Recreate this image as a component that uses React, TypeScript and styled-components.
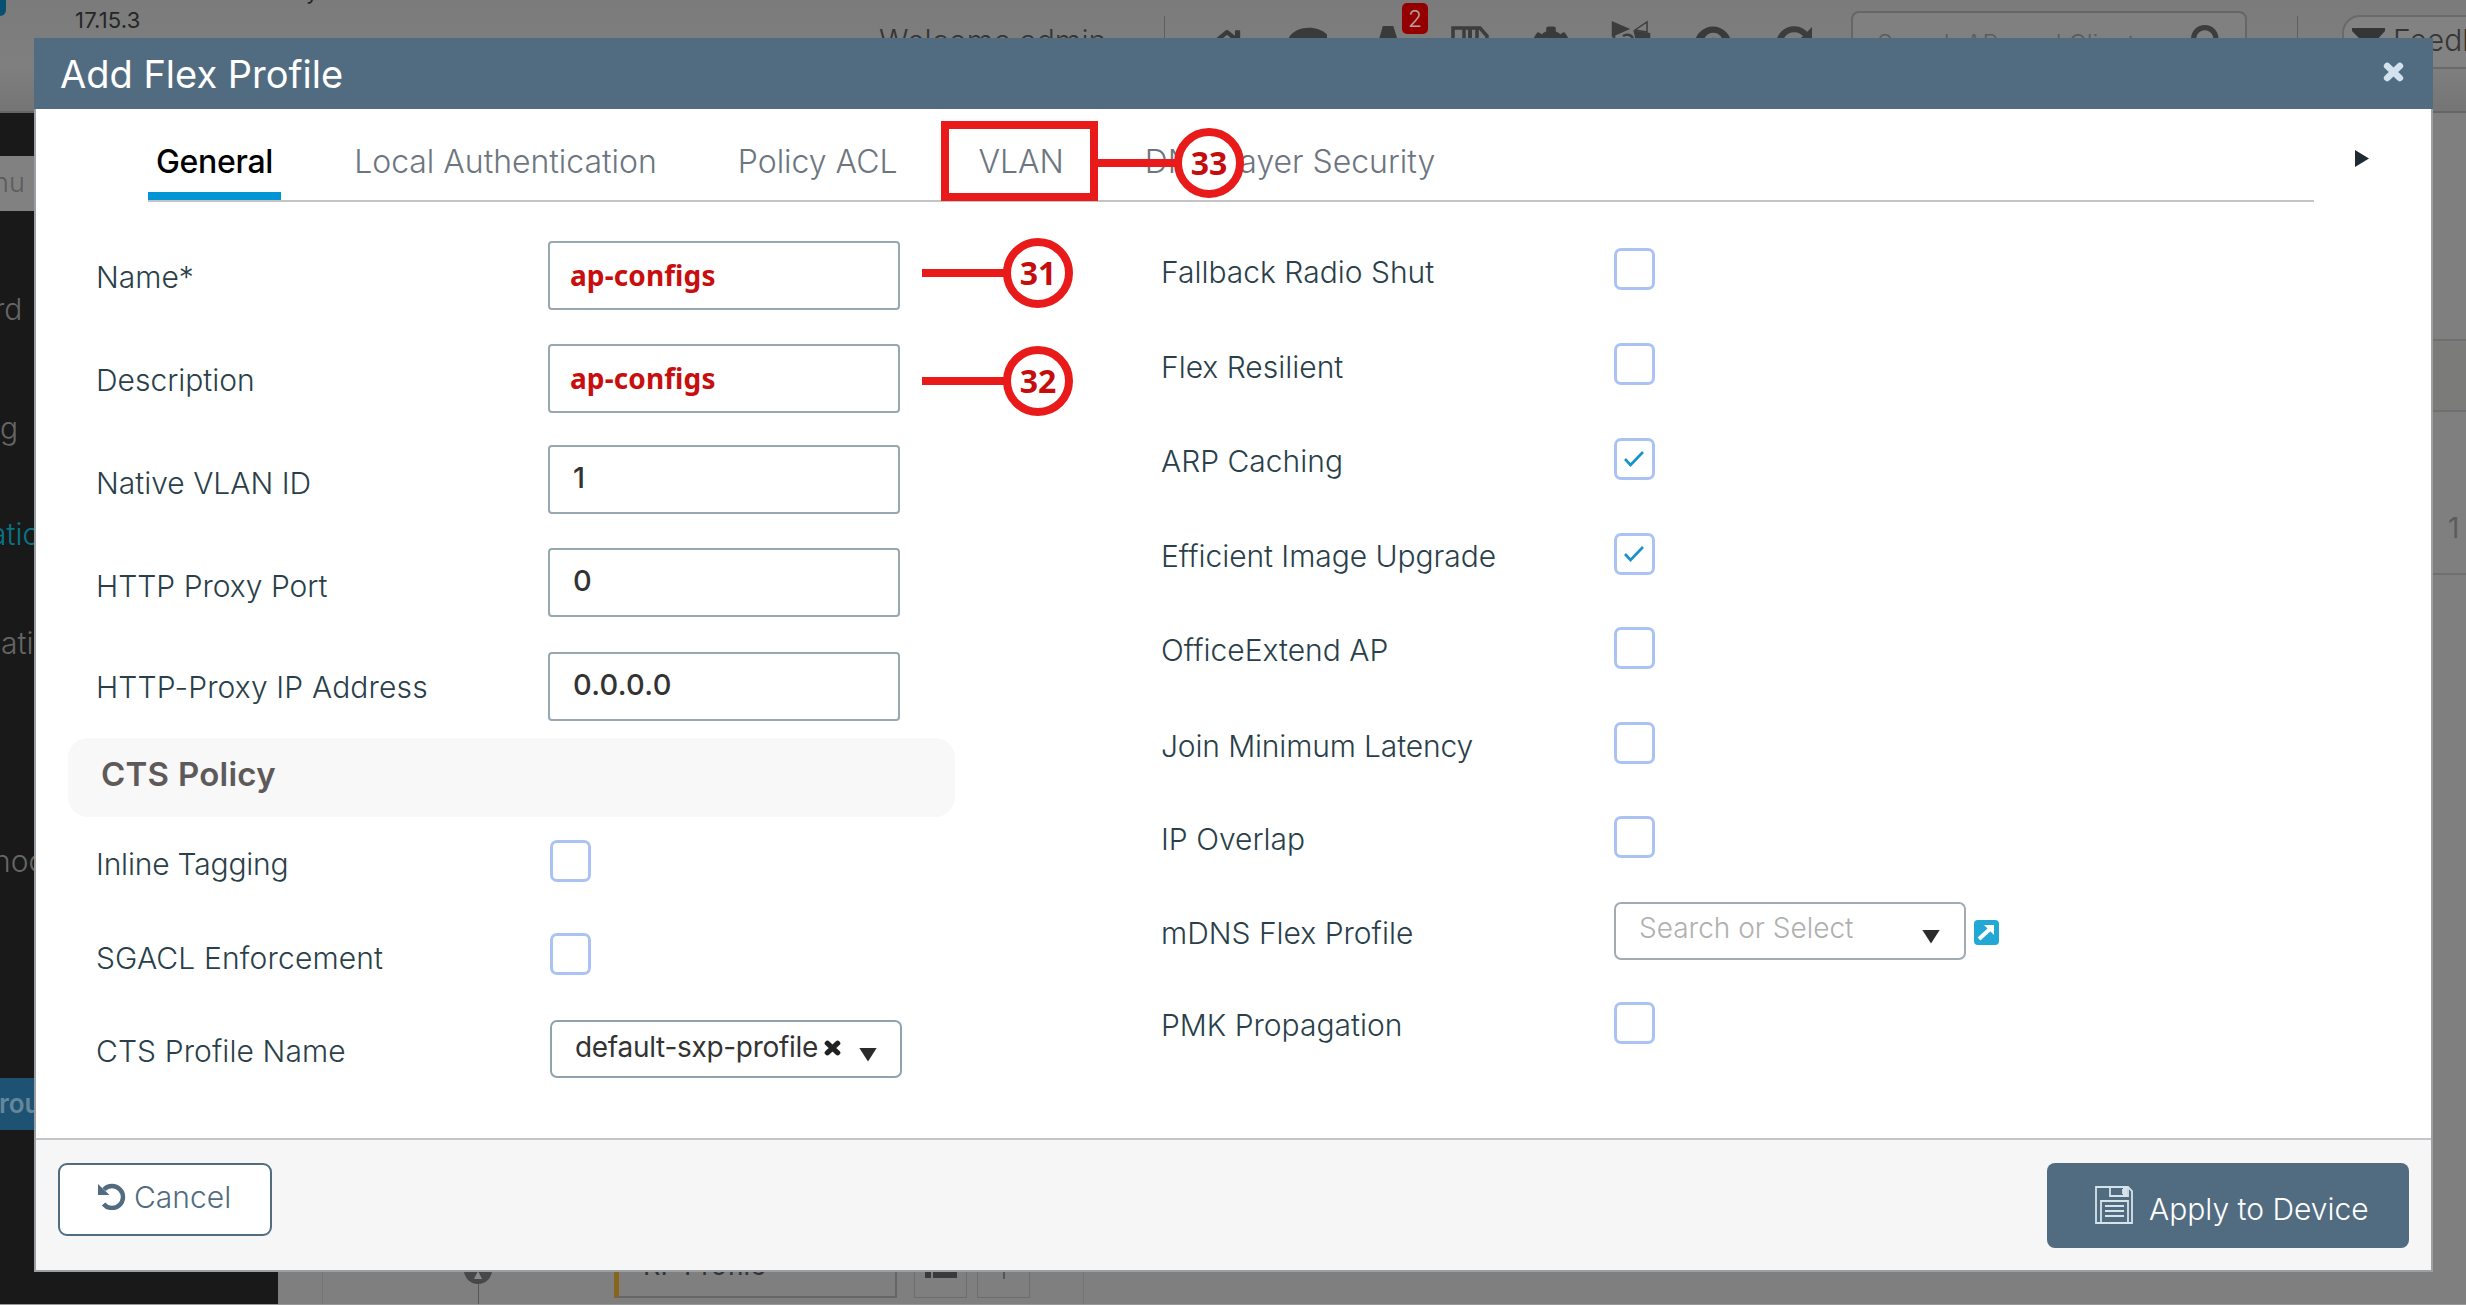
import React from "react";
import styled, { createGlobalStyle, css } from "styled-components";
import { FaHome, FaCog, FaSearch, FaQuestionCircle } from "react-icons/fa";

const ui = `Inter, "Liberation Sans", sans-serif`;
const callout = `"Noto Sans", "Open Sans", sans-serif`;
const slate = "#516c80";
const red = "#e91a1a";

const GlobalStyle = createGlobalStyle`
  * { box-sizing: border-box; }
  html, body { margin: 0; padding: 0; }
  body { width: 2466px; height: 1305px; overflow: hidden; font-family: ${ui}; }
`;

const Page = styled.div`
  position: relative;
  width: 2466px;
  height: 1305px;
  overflow: hidden;
  display: flex;
  flex-direction: column;
  background: #7f7f7f;
  border-bottom: 1px solid #999;
`;

/* ---------- dimmed application behind the dialog ---------- */

const TopBar = styled.header`
  height: 113px;
  flex: none;
  display: flex;
  align-items: flex-start;
  overflow: hidden;
  background: linear-gradient(#7b7b7b, #7f7f7f 60%, #757575);
  border-bottom: 2px solid #666;
  color: #353535;
  > * { flex: none; }
`;
const Brand = styled.div`
  width: 879px;
  display: flex;
  align-items: flex-start;
`;
const LogoEdge = styled.div`
  width: 6px;
  height: 40px;
  margin-top: -24px;
  border-radius: 0 20px 20px 0;
  background: #075072;
`;
const Product = styled.div`
  margin: -24px 0 0 69px;
  font-size: 22px;
  line-height: 31px;
  color: #262626;
  div:first-child { padding-left: 231px; height: 29px; }
  div:last-child { letter-spacing: 0.2px; }
`;
const Welcome = styled.div`
  width: 285px;
  padding-top: 23px;
  font-size: 30.5px;
  font-weight: 300;
  line-height: 36px;
  white-space: nowrap;
`;
const Rule = styled.div<{ $ml?: number }>`
  width: 1px;
  height: 60px;
  margin: 16px 0 0 ${(p) => p.$ml ?? 0}px;
  background: #5f5f5f;
`;
const Tools = styled.div`
  display: flex;
  align-items: flex-start;
  gap: 43px;
  padding: 26px 0 0 43px;
  width: 686px;
  svg { flex: none; width: 38px; height: 38px; color: #3a3a3a; }
`;
const AlertTool = styled.div`
  position: relative;
  height: 38px;
`;
const AlertCount = styled.span`
  position: absolute;
  left: 32px;
  top: -23px;
  width: 26px;
  height: 31px;
  border-radius: 5px;
  background: #940000;
  color: #b9a0a0;
  font-size: 23px;
  font-weight: 300;
  line-height: 33px;
  text-align: center;
`;
const GlobalSearch = styled.div`
  width: 396px;
  height: 54px;
  margin-top: 11px;
  padding: 13px 20px 0 24px;
  display: flex;
  justify-content: space-between;
  border: 2px solid #666;
  border-radius: 8px;
  background: #808080;
  color: #5c5c5c;
  font-size: 25px;
  font-weight: 300;
  line-height: 36px;
  white-space: nowrap;
  svg { width: 34px; height: 34px; margin-top: -1px; color: #3d3d3d; }
`;
const Feedback = styled.div`
  width: 200px;
  height: 54px;
  margin: 15px 0 0 44px;
  padding: 5px 8px;
  display: flex;
  gap: 8px;
  border: 2px solid #6a6a6a;
  border-radius: 18px;
  background: #828282;
  color: #353535;
  font-size: 30px;
  font-weight: 300;
  line-height: 36px;
  svg { flex: none; width: 33px; height: 30px; margin-top: 6px; }
`;
const Below = styled.div`
  flex: 1;
  display: flex;
  min-height: 0;
`;
const SideNav = styled.nav`
  width: 278px;
  flex: none;
  padding-top: 43px;
  background: #191919;
  overflow: hidden;
`;
const NavSearch = styled.div`
  height: 55px;
  margin-bottom: 80px;
  background: #818181;
  color: #5c5c5c;
  font-size: 27px;
  font-weight: 300;
  line-height: 53px;
  text-indent: -7px;
`;
const NavItem = styled.div<{ $h: number; $x: number; $tone?: "link" | "active" }>`
  height: ${(p) => p.$h}px;
  text-indent: ${(p) => p.$x}px;
  font-size: 30px;
  font-weight: 300;
  line-height: 36px;
  color: #666;
  white-space: nowrap;
  ${(p) => p.$tone === "link" && css`color: #087488;`}
  ${(p) => p.$tone === "active" && css`
    background: #1d5272; color: #66869a; font-size: 26px; font-weight: 600; line-height: 52px;
  `}
`;
const Main = styled.main`
  flex: 1;
  display: flex;
  align-items: flex-end;
  justify-content: space-between;
`;
const Flow = styled.div`
  height: 60px;
  margin-left: 44px;
  padding-left: 141px;
  width: 762px;
  display: flex;
  border-left: 1px solid #747474;
  border-right: 1px solid #747474;
`;
const FlowPin = styled.div`
  width: 28px;
  margin-right: 122px;
  display: flex;
  flex-direction: column;
  align-items: center;
`;
const PinDot = styled.div`
  width: 28px;
  height: 28px;
  margin-top: 12px;
  border-radius: 50%;
  background: #484848;
  &::after {
    content: "";
    display: block;
    width: 8px;
    height: 8px;
    margin: 15px auto 0;
    background: #8a8a8a;
    clip-path: polygon(50% 0, 100% 100%, 0 100%);
  }
`;
const PinStem = styled.div`
  flex: 1;
  width: 1px;
  background: #555;
`;
const FlowBox = styled.div`
  width: 283px;
  height: 54px;
  padding: 2px 0 0 24px;
  border: 2px solid #666;
  border-left: 5px solid #87651a;
  color: #333;
  font-size: 27px;
  line-height: 36px;
`;
const FlowButton = styled.div<{ $ml: number }>`
  width: 53px;
  height: 54px;
  margin-left: ${(p) => p.$ml}px;
  padding: 22px 10px 0;
  border: 1px solid #6c6c6c;
  svg { display: block; }
`;
const TableEdge = styled.div`
  width: 35px;
  align-self: flex-start;
  margin-top: 226px;
`;
const TableHead = styled.div`
  height: 73px;
  border-top: 2px solid #6f6f6f;
  border-bottom: 2px solid #6f6f6f;
  background: #7b7c79;
`;
const TableRow = styled.div`
  height: 163px;
  padding: 98px 0 0 17px;
  border-bottom: 2px solid #6f6f6f;
  color: #5b5b5b;
  font-size: 28px;
  line-height: 36px;
`;

/* ---------- dialog ---------- */

const Dialog = styled.section`
  position: absolute;
  left: 34px;
  top: 38px;
  width: 2399px;
  height: 1234px;
  display: flex;
  flex-direction: column;
  border: solid #9aa0a4;
  border-width: 0 2px 2px 2px;
  background: #fff;
`;
const TitleBar = styled.div`
  height: 71px;
  flex: none;
  margin: 0 -2px;
  padding: 0 29px 0 26px;
  display: flex;
  align-items: center;
  justify-content: space-between;
  background: ${slate};
  svg { margin-top: -3px; }
`;
const Title = styled.h1`
  margin: 0;
  color: #fff;
  font-size: 38px;
  font-weight: 400;
  line-height: 44px;
`;
const TabStrip = styled.div`
  display: flex;
  height: 93px;
  flex: none;
`;
const Tabs = styled.div`
  height: 93px;
  width: 2166px;
  flex: none;
  margin-left: 112px;
  display: flex;
  gap: 65px;
  border-bottom: 2px solid #c4c4c4;
`;
const Tab = styled.div<{ $on?: boolean }>`
  height: 91px;
  padding: 35px 8px 0;
  font-size: 32px;
  font-weight: 300;
  line-height: 36px;
  letter-spacing: -0.02px;
  white-space: nowrap;
  color: #6d7680;
  ${(p) => p.$on && css`
    font-weight: 500; letter-spacing: -0.3px; color: #000; border-bottom: 8px solid #0096d6;
  `}
`;
const NextTab = styled.div`
  margin: 41px 0 0 41px;
  width: 14px;
  height: 17px;
  background: #202a33;
  clip-path: polygon(0 0, 100% 50%, 0 100%);
`;
const Form = styled.div`
  flex: 1;
  display: flex;
`;
const LeftColumn = styled.div`
  width: 1126px;
  padding: 39px 0 0 60px;
`;
const RightColumn = styled.div`
  flex: 1;
  padding-top: 46px;
  margin-left: -1px;
`;
const Row = styled.div<{ $h: number; $label: number }>`
  height: ${(p) => p.$h}px;
  display: grid;
  grid-template-columns: ${(p) => p.$label}px auto;
  align-items: start;
  justify-content: start;
`;
const Label = styled.label<{ $dy: number; $ls?: number }>`
  padding-top: ${(p) => p.$dy}px;
  font-size: 30px;
  font-weight: 300;
  line-height: 36px;
  letter-spacing: ${(p) => p.$ls ?? 0}px;
  white-space: nowrap;
  color: #2a3f4a;
`;
const Field = styled.div<{ $entered?: boolean }>`
  width: 352px;
  height: 69px;
  padding: 13px 0 0 23px;
  border: 2px solid #98a8b0;
  border-radius: 4px;
  font-size: 29px;
  font-weight: 500;
  line-height: 36px;
  letter-spacing: 0.3px;
  color: #333;
  ${(p) => p.$entered && css`
    padding: 14px 0 0 20px;
    font-family: ${callout};
    font-size: 28px;
    font-weight: 700;
    letter-spacing: 0.1px;
    color: #c80e0e;
  `}
`;
const Section = styled.h2`
  width: 887px;
  height: 79px;
  margin: 0 0 23px -28px;
  padding: 18px 0 0 33px;
  border-radius: 20px;
  background: #f8f8f8;
  color: #5e5a5a;
  font-size: 33px;
  font-weight: 600;
  line-height: 36px;
  letter-spacing: 0.25px;
`;
const Check = styled.div`
  width: 41px;
  height: 42px;
  border: 3px solid #abc3f4;
  border-radius: 7px;
  svg { display: block; margin: 9px 0 0 6px; }
`;
const Picker = styled.div<{ $empty?: boolean }>`
  width: 352px;
  height: 58px;
  padding-left: 23px;
  display: flex;
  align-items: center;
  border: 2px solid ${(p) => (p.$empty ? "#a0abb3" : "#8fa3ac")};
  border-radius: 7px;
  font-size: 28px;
  font-weight: 300;
  line-height: 36px;
  color: ${(p) => (p.$empty ? "#b0b0b0" : "#333")};
  white-space: nowrap;
`;
const PickerText = styled.span<{ $w: number; $heavy?: boolean }>`
  width: ${(p) => p.$w}px;
  margin-top: ${(p) => (p.$heavy ? -4 : -6)}px;
  font-weight: ${(p) => (p.$heavy ? 400 : 300)};
  letter-spacing: ${(p) => (p.$heavy ? -0.3 : 0)}px;
`;
const Caret = styled.span`
  width: 18px;
  height: 14px;
  margin-top: 11px;
  background: #2b2b2b;
  clip-path: polygon(0 0, 100% 0, 50% 100%);
`;
const ClearMark = styled.span`
  display: flex;
  width: 17px;
  margin: -3px 18px 0 0;
`;
const PickerGroup = styled.div`
  display: flex;
  gap: 8px;
`;
const Jump = styled.span`
  width: 25px;
  height: 25px;
  margin-top: 18px;
  border-radius: 4px;
  background: #21a8d5;
  svg { display: block; }
`;
const Footer = styled.footer`
  height: 132px;
  flex: none;
  padding: 23px 22px 0 22px;
  display: flex;
  justify-content: space-between;
  align-items: flex-start;
  border-top: 2px solid #c3c6c9;
  background: #f6f6f7;
`;
const CancelButton = styled.button`
  width: 214px;
  height: 73px;
  padding: 0 0 6px 38px;
  display: flex;
  align-items: center;
  gap: 8px;
  border: 2px solid ${slate};
  border-radius: 9px;
  background: #fff;
  color: ${slate};
  font: 300 30px/36px ${ui};
`;
const ApplyButton = styled.button`
  width: 362px;
  height: 85px;
  padding: 1px 0 0 48px;
  display: flex;
  align-items: center;
  gap: 16px;
  border: 0;
  border-radius: 8px;
  background: ${slate};
  color: #fff;
  font: 300 30px/36px ${ui};
  white-space: nowrap;
  svg { flex: none; margin-top: -2px; }
  span { margin-top: 6px; }
`;

/* ---------- step callouts over the dialog ---------- */

const Highlight = styled.div`
  position: absolute;
  left: 941px;
  top: 121px;
  width: 157px;
  height: 80px;
  border: 8px solid ${red};
`;
const Step = styled.div<{ $x: number; $y: number; $line: number }>`
  position: absolute;
  left: ${(p) => p.$x}px;
  top: ${(p) => p.$y}px;
  display: flex;
  align-items: center;
  &::before {
    content: "";
    width: ${(p) => p.$line}px;
    height: 8px;
    margin-right: -3px;
    background: ${red};
  }
`;
const StepNumber = styled.div`
  width: 70px;
  height: 70px;
  border: 8px solid ${red};
  border-radius: 50%;
  background: #fff;
  color: #c50d0d;
  font: 700 32px/54px ${callout};
  text-align: center;
`;

const Cross = ({ size, color, h }: { size: number; h: number; color: string }) => (
  <svg width={size} height={h} viewBox="0 0 20 20" preserveAspectRatio="none">
    <path d="M4 4L16 16M16 4L4 16" stroke={color} strokeWidth="6.4" strokeLinecap="round" />
  </svg>
);
const Tick = () => (
  <svg width="22" height="18" viewBox="0 0 22 18" fill="none">
    <path d="M2 9L7.5 15L20 2" stroke="#1793c9" strokeWidth="2.6" />
  </svg>
);
const Undo = () => (
  <svg width="28" height="27" viewBox="0 0 28 27" fill="none">
    <path d="M6 6.5A11 11 0 1 1 5.5 21" stroke={slate} strokeWidth="4.4" />
    <path d="M0 1V12H11.5Z" fill={slate} />
  </svg>
);
const Floppy = () => (
  <svg width="38" height="38" viewBox="0 0 38 38" fill="none" stroke="#d5e3ea" strokeWidth="1.8">
    <path d="M1 1H33L37 5V37H1Z" />
    <path d="M15 1V10H33V1M28 3V8" />
    <path d="M28 2H32V9H28Z" fill="#d5e3ea" stroke="none" />
    <path d="M6 37V15H33V37M10 20H29M10 25H29M10 30H29" />
  </svg>
);
const Signal = () => (
  <svg viewBox="0 0 38 38" fill="#3a3a3a">
    <path d="M-1 13C6 -2 34 -2 41 13L20 38Z" />
  </svg>
);
const SaveStack = () => (
  <svg viewBox="0 0 38 38" fill="none" stroke="#3d3d3d" strokeWidth="3.5">
    <path d="M2 36V2H29L36 10V36ZM13 2V16H26V2" />
    <path d="M17 2H21V14H17Z" fill="#3d3d3d" stroke="none" />
  </svg>
);
const Alert = () => (
  <svg viewBox="0 0 38 38" fill="#3a3a3a">
    <path d="M14 -4H22L34 34H25L19 16L12 34H3Z" />
  </svg>
);
const MapFlag = () => (
  <svg viewBox="0 0 38 38" fill="none" stroke="#3d3d3d" strokeWidth="2.5" overflow="visible">
    <path d="M0 -3L14 3L0 9Z" fill="#3d3d3d" />
    <path d="M1 0V34H34V12M10 10A7 7 0 0 1 20 12" />
    <path d="M22 4L34 -4V6Z" strokeWidth="1.5" />
    <path d="M22 6L36 8V14H24Z" fill="#3d3d3d" />
  </svg>
);
const Refresh = () => (
  <svg viewBox="0 0 38 38" fill="none">
    <path d="M31 9A15 15 0 1 0 33 24" stroke="#3d3d3d" strokeWidth="6" />
    <path d="M37 1V16H22Z" fill="#3d3d3d" />
  </svg>
);
const Funnel = () => (
  <svg viewBox="0 0 33 30" fill="#353535" preserveAspectRatio="none">
    <path d="M0 0H33V3L23 14V30L11 24V14L0 3Z" />
  </svg>
);

const fields = [
  { label: "Name*", value: "ap-configs", entered: true, h: 103, dy: 18 },
  { label: "Description", value: "ap-configs", entered: true, h: 101, dy: 18 },
  { label: "Native VLAN ID", value: "1", h: 103, dy: 20 },
  { label: "HTTP Proxy Port", value: "0", h: 104, dy: 20 },
  { label: "HTTP-Proxy IP Address", value: "0.0.0.0", h: 86, dy: 17, ls: 0.15 },
];

const options = [
  { label: "Fallback Radio Shut", h: 95, dy: 6 },
  { label: "Flex Resilient", h: 95, dy: 6 },
  { label: "ARP Caching", on: true, h: 95, dy: 5 },
  { label: "Efficient Image Upgrade", on: true, h: 94, dy: 5, ls: -0.05 },
  { label: "OfficeExtend AP", h: 95, dy: 5 },
  { label: "Join Minimum Latency", h: 94, dy: 6, ls: -0.15 },
  { label: "IP Overlap", h: 86, dy: 5 },
];

export default function App() {
  return (
    <Page>
      <GlobalStyle />
      <TopBar>
        <Brand>
          <LogoEdge />
          <Product>
            <div>y</div>
            <div>17.15.3</div>
          </Product>
        </Brand>
        <Welcome>Welcome admin</Welcome>
        <Rule />
        <Tools>
          <FaHome />
          <Signal />
          <AlertTool>
            <Alert />
            <AlertCount>2</AlertCount>
          </AlertTool>
          <SaveStack />
          <FaCog />
          <MapFlag />
          <FaQuestionCircle />
          <Refresh />
        </Tools>
        <GlobalSearch>
          Search APs and Clients
          <FaSearch />
        </GlobalSearch>
        <Rule $ml={50} />
        <Feedback>
          <Funnel />
          Feedback
        </Feedback>
      </TopBar>
      <Below>
        <SideNav>
          <NavSearch>nu I</NavSearch>
          <NavItem $h={119} $x={-6}>rd</NavItem>
          <NavItem $h={106} $x={0}>g</NavItem>
          <NavItem $h={109} $x={-10} $tone="link">atio</NavItem>
          <NavItem $h={218} $x={1}>ati</NavItem>
          <NavItem $h={235} $x={-7}>noc</NavItem>
          <NavItem $h={52} $x={-1} $tone="active">rou</NavItem>
        </SideNav>
        <Main>
          <Flow>
            <FlowPin>
              <PinDot />
              <PinStem />
            </FlowPin>
            <FlowBox>RF Profile</FlowBox>
            <FlowButton $ml={17}>
              <svg width="32" height="12"><path d="M0 6H6M8 6H32" stroke="#3a3a3a" strokeWidth="10" /></svg>
            </FlowButton>
            <FlowButton $ml={10}>
              <svg width="32" height="12"><path d="M16 0V12" stroke="#555" strokeWidth="2" /></svg>
            </FlowButton>
          </Flow>
          <TableEdge>
            <TableHead />
            <TableRow>1</TableRow>
          </TableEdge>
        </Main>
      </Below>

      <Dialog>
        <TitleBar>
          <Title>Add Flex Profile</Title>
          <Cross size={21} h={20} color="#d3e2ee" />
        </TitleBar>
        <TabStrip>
          <Tabs>
            <Tab $on>General</Tab>
            <Tab>Local Authentication</Tab>
            <Tab>Policy ACL</Tab>
            <Tab>VLAN</Tab>
            <Tab>DNS Layer Security</Tab>
          </Tabs>
          <NextTab />
        </TabStrip>
        <Form>
          <LeftColumn>
            {fields.map((f) => (
              <Row key={f.label} $h={f.h} $label={452}>
                <Label $dy={f.dy} $ls={f.ls}>{f.label}</Label>
                <Field $entered={f.entered}>{f.value}</Field>
              </Row>
            ))}
            <Section>CTS Policy</Section>
            <Row $h={93} $label={454}>
              <Label $dy={6} $ls={-0.2}>Inline Tagging</Label>
              <Check />
            </Row>
            <Row $h={87} $label={454}>
              <Label $dy={7} $ls={0.15}>SGACL Enforcement</Label>
              <Check />
            </Row>
            <Row $h={58} $label={454}>
              <Label $dy={13} $ls={0.1}>CTS Profile Name</Label>
              <Picker>
                <PickerText $w={249} $heavy>default-sxp-profile</PickerText>
                <ClearMark><Cross size={17} h={16} color="#222" /></ClearMark>
                <Caret />
              </Picker>
            </Row>
          </LeftColumn>
          <RightColumn>
            {options.map((o) => (
              <Row key={o.label} $h={o.h} $label={453}>
                <Label $dy={o.dy} $ls={o.ls}>{o.label}</Label>
                <Check>{o.on && <Tick />}</Check>
              </Row>
            ))}
            <Row $h={100} $label={453}>
              <Label $dy={13}>mDNS Flex Profile</Label>
              <PickerGroup>
                <Picker $empty>
                  <PickerText $w={283}>Search or Select</PickerText>
                  <Caret />
                </Picker>
                <Jump>
                  <svg width="25" height="25" viewBox="0 0 25 25">
                    <path d="M5 19L17 8" stroke="#fff" strokeWidth="4" />
                    <path d="M10 5H20V15Z" fill="#fff" />
                  </svg>
                </Jump>
              </PickerGroup>
            </Row>
            <Row $h={50} $label={453}>
              <Label $dy={5}>PMK Propagation</Label>
              <Check />
            </Row>
          </RightColumn>
        </Form>
        <Footer>
          <CancelButton>
            <Undo />
            Cancel
          </CancelButton>
          <ApplyButton>
            <Floppy />
            <span>Apply to Device</span>
          </ApplyButton>
        </Footer>
      </Dialog>

      <Highlight />
      <Step $x={1098} $y={128} $line={79}><StepNumber>33</StepNumber></Step>
      <Step $x={922} $y={238} $line={84}><StepNumber>31</StepNumber></Step>
      <Step $x={922} $y={346} $line={84}><StepNumber>32</StepNumber></Step>
    </Page>
  );
}
